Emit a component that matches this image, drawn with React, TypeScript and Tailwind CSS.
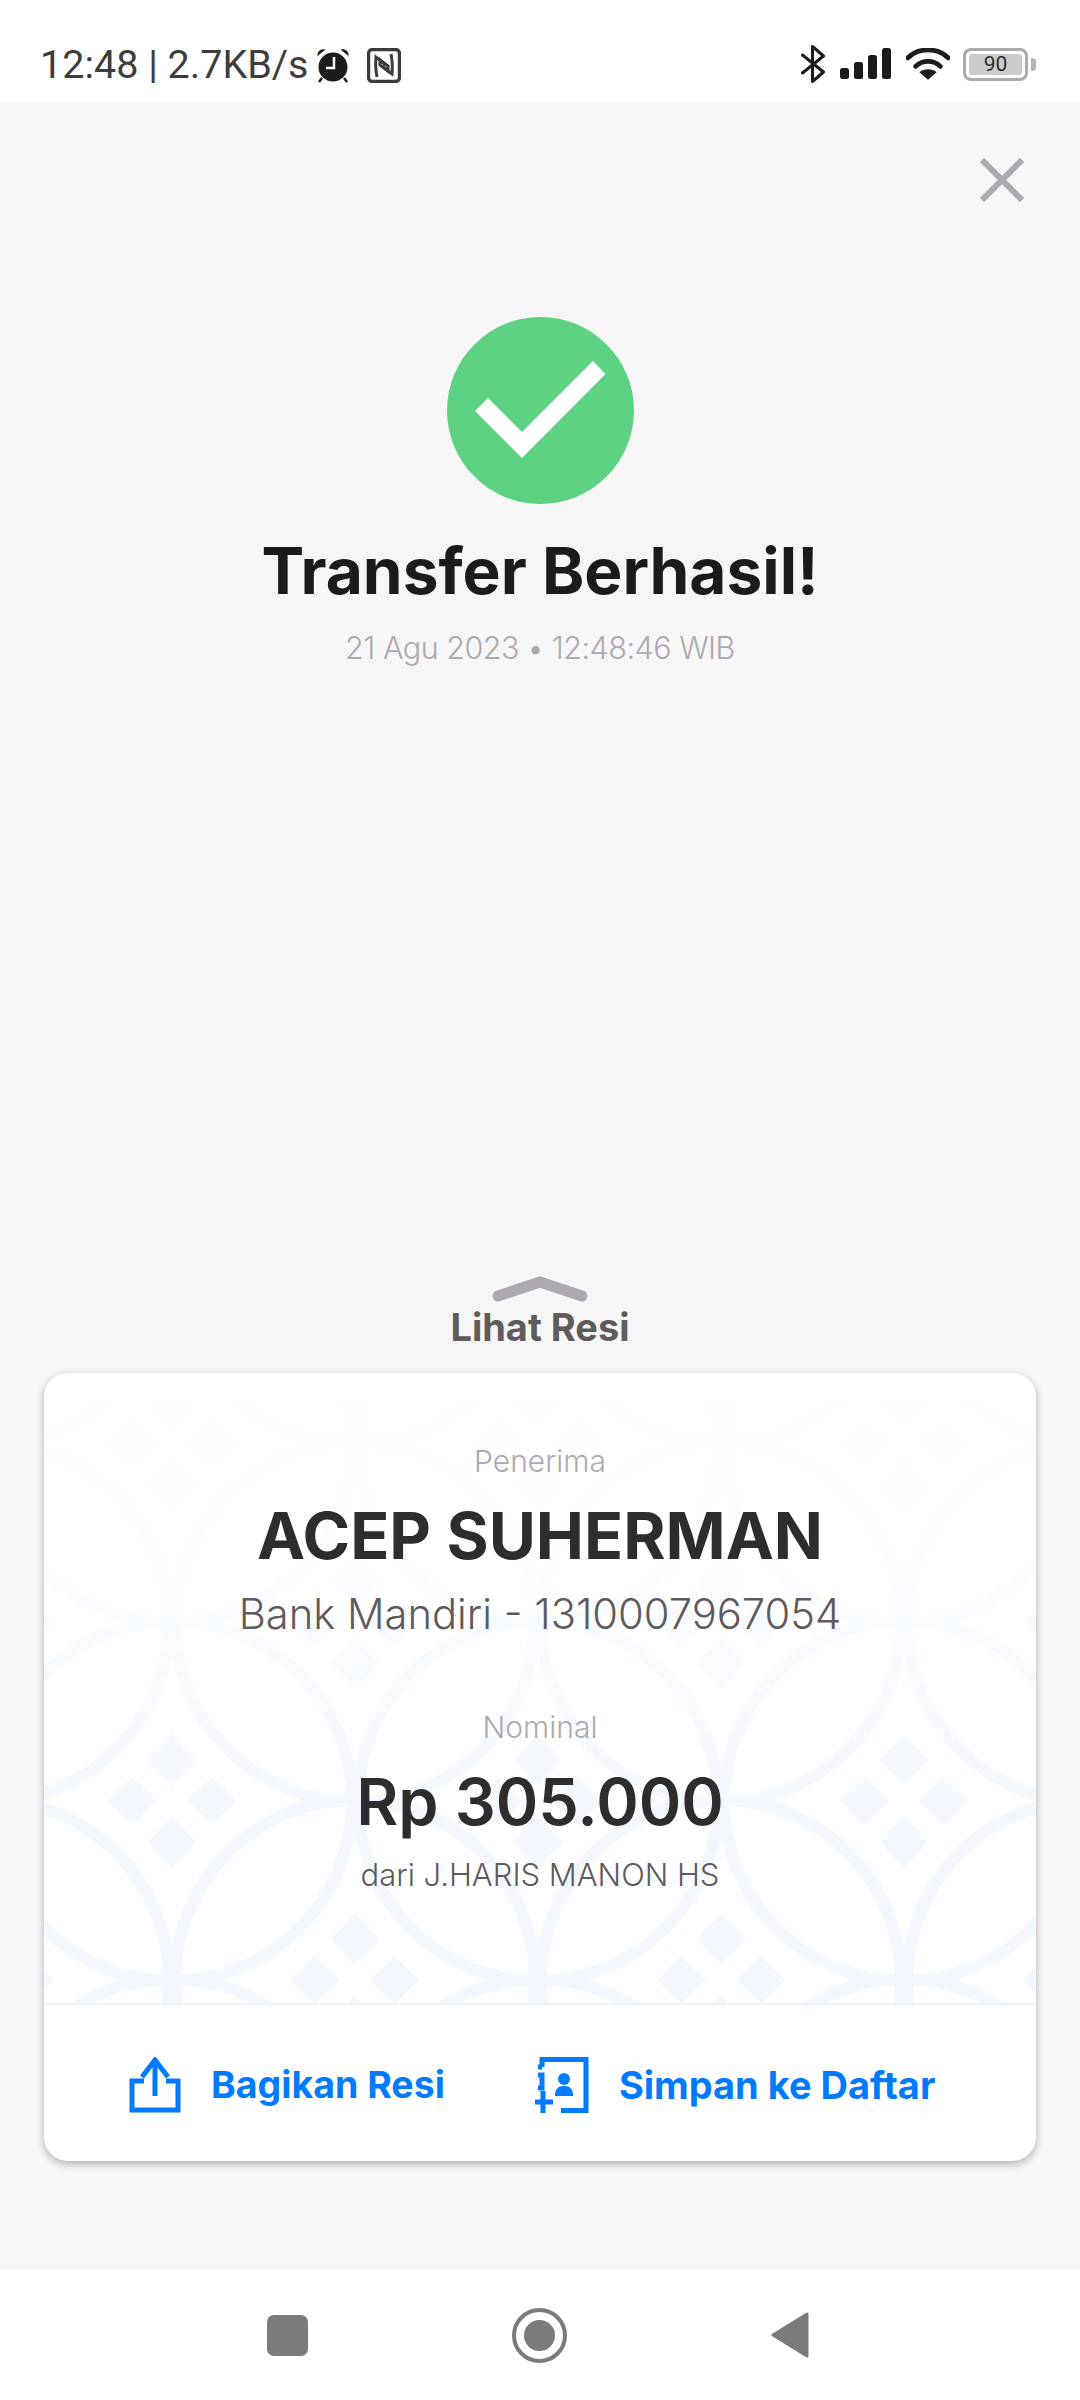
import React from "react";

function Alarm() {
  return (
    <svg width="36" height="36" viewBox="0 0 34 36" className="ml-[6px]">
      <circle cx="17" cy="20" r="14.5" fill="#1b1b1b" />
      <path d="M1.5 9 A6 6 0 0 1 9.5 2.5 Z M32.5 9 A6 6 0 0 0 24.5 2.5 Z" fill="#1b1b1b" />
      <path d="M6 31 L3 35 M28 31 L31 35" stroke="#1b1b1b" strokeWidth="2.5" />
      <path d="M18 10 V21 H10" stroke="#fff" strokeWidth="2.5" fill="none" />
    </svg>
  );
}

function Nfc() {
  return (
    <svg width="34" height="35" viewBox="0 0 34 35" className="ml-[16px]">
      <rect x="1.5" y="1.5" width="31" height="32" rx="4" fill="none" stroke="#3b3b3b" strokeWidth="3.4" />
      <path d="M10 29 C8.5 22 8.5 15 9 9 L21 18 V23 L15 18" fill="none" stroke="#3b3b3b" strokeWidth="3" />
      <path d="M24 6 C25.5 13 25.5 20 25 26 L13 17 V12 L19 17" fill="none" stroke="#3b3b3b" strokeWidth="3" />
    </svg>
  );
}

function StatusRight() {
  return (
    <div className="flex items-center pt-[2px]">
      <svg width="24" height="40" viewBox="0.5 0 24 40">
        <path d="M2 11 L23 28 L12 37.5 V2.5 L23 12 L2 29" fill="none" stroke="#1b1b1b" strokeWidth="3" strokeLinejoin="round" strokeLinecap="round" />
      </svg>
      <svg width="51" height="32" viewBox="1 0 51 32" className="ml-[15px]">
        <rect x="1" y="20" width="9" height="11" rx="2.5" fill="#1b1b1b" />
        <rect x="15" y="14" width="9" height="17" rx="2.5" fill="#1b1b1b" />
        <rect x="29" y="7" width="9" height="24" rx="2.5" fill="#1b1b1b" />
        <rect x="43" y="0" width="9" height="31" rx="2.5" fill="#1b1b1b" />
      </svg>
      <svg width="44" height="33" viewBox="0 0 46 34" className="ml-[15px]">
        <path d="M2 10 C13 -1 33 -1 44 10" fill="none" stroke="#1b1b1b" strokeWidth="5" strokeLinecap="round" />
        <path d="M10 19 C17 12 29 12 36 19" fill="none" stroke="#1b1b1b" strokeWidth="5" strokeLinecap="round" />
        <path d="M23 33 L14 25 C19 21 27 21 32 25 Z" fill="#1b1b1b" />
      </svg>
      <div className="ml-[13px] w-[65px] h-[33px] rounded-[8px] border-[3px] border-[#ababab] bg-white p-[3px] flex">
        <div className="flex-1 rounded-[3px] bg-[#cccccc] flex items-center justify-center text-[#2e2e2e] text-[21px] leading-none font-['Roboto',sans-serif]">
          90
        </div>
      </div>
      <div className="ml-[3px] w-[5px] h-[13px] bg-[#b5b5b5] rounded-r-[4px]" />
    </div>
  );
}

function Pattern() {
  return (
    <svg
      className="absolute inset-0 w-full h-full [mask-image:linear-gradient(to_bottom,rgba(0,0,0,0.03),rgba(0,0,0,0.35)_32%,black_72%)]"
      aria-hidden="true"
    >
      <defs>
        <pattern id="shippo" width="366" height="358" patternUnits="userSpaceOnUse" patternTransform="translate(128 70)">
          <g fill="none" stroke="#f3f8fe" strokeWidth="12">
            <circle cx="0" cy="0" r="180" />
            <circle cx="366" cy="0" r="180" />
            <circle cx="0" cy="358" r="180" />
            <circle cx="366" cy="358" r="180" />
            <circle cx="183" cy="179" r="180" />
          </g>
          <g fill="#f3f8fe">
            <g id="cl">
              <path d="M0 -67 L24 -41 L0 -15 L-24 -41Z" />
              <path d="M0 67 L24 41 L0 15 L-24 41Z" />
              <path d="M-40 -24 L-15 0 L-40 24 L-64 0Z" />
              <path d="M40 -24 L15 0 L40 24 L64 0Z" />
            </g>
            <use href="#cl" x="366" />
            <use href="#cl" y="358" />
            <use href="#cl" x="366" y="358" />
            <use href="#cl" x="183" y="179" />
          </g>
        </pattern>
      </defs>
      <rect width="100%" height="100%" fill="url(#shippo)" />
    </svg>
  );
}

export default function App() {
  return (
    <div className="w-[1080px] h-[2400px] flex flex-col bg-[#f6f6f6] font-['Inter',sans-serif] overflow-hidden">
      <div className="h-[102px] bg-white flex items-start justify-between pl-[40px] pr-[44px] pt-[42px]">
        <div className="flex items-center">
          <span className="font-['Roboto',sans-serif] text-[39.5px] leading-[46px] text-[#3d3d3d]">12:48 | 2.7KB/s</span>
          <Alarm />
          <Nfc />
        </div>
        <StatusRight />
      </div>

      <main className="flex-1 flex flex-col items-center relative">
        <div className="self-end pt-[56px] pr-[56px]">
          <svg width="44" height="44" viewBox="0 0 44 44" className="block">
            <path d="M2 2 L42 42 M42 2 L2 42" stroke="#aea8b0" strokeWidth="6" />
          </svg>
        </div>
        <div className="mt-[115px] w-[187px] h-[187px] rounded-full bg-[#5ed283] flex items-center justify-center">
          <svg width="131" height="97" viewBox="0 0 131 97" className="-mt-[3px]">
            <polygon points="0,50 13,37 47,71 118,0 130.5,13 47,97" fill="#fff" />
          </svg>
        </div>
        <h1 className="mt-[28px] text-[64px] leading-[78px] font-bold text-[#1b1b1b]">Transfer Berhasil!</h1>
        <p className="mt-[18px] text-[30.5px] leading-[40px] text-[#aea8b0] font-light tracking-[-0.5px]">21 Agu 2023 • 12:48:46 WIB</p>

        <svg width="96" height="26" viewBox="0 0 96 26" className="mt-[608px] block">
          <path d="M6 20 L48 6 L90 20" fill="none" stroke="#aea8b0" strokeWidth="11" strokeLinecap="round" strokeLinejoin="miter" />
        </svg>
        <p className="mt-[3px] text-[38px] leading-[44px] font-bold text-[#5f5a5c]">Lihat Resi</p>

        <section className="mt-[24px] w-[992px] h-[788px] rounded-[24px] bg-white shadow-[0_3px_8px_rgba(0,0,0,0.28)] overflow-hidden flex flex-col">
          <div className="relative h-[632px] border-b-2 border-[#f1f2f4] flex flex-col items-center">
            <Pattern />
            <div className="relative flex flex-col items-center">
              <p className="mt-[68px] text-[30px] leading-[40px] font-light text-[#aea8b0]">Penerima</p>
              <h2 className="mt-[17px] text-[64.5px] leading-[76px] font-bold text-[#2d2d2d]">ACEP SUHERMAN</h2>
              <p className="mt-[15px] text-[41.7px] leading-[50px] font-light text-[#5f5a5c]">Bank Mandiri - 1310007967054</p>
              <p className="mt-[68px] text-[30px] leading-[40px] font-light text-[#aea8b0]">Nominal</p>
              <p className="mt-[17px] text-[64.5px] leading-[76px] font-semibold text-[#2d2d2d]">Rp 305.000</p>
              <p className="mt-[15px] text-[31px] leading-[40px] font-light text-[#5f5a5c]">dari J.HARIS MANON HS</p>
            </div>
          </div>
          <div className="flex-1 flex items-center pl-[85px] pt-[3px]">
            <svg width="52" height="56" viewBox="0 0 52 56">
              <path d="M15 24 H3 V53 H49 V24 H37" fill="none" stroke="#007aff" strokeWidth="5" />
              <path d="M26 39 V4 M13 20 L26 3 L39 20" fill="none" stroke="#007aff" strokeWidth="5" />
            </svg>
            <span className="ml-[30px] text-[37.5px] leading-[46px] font-bold text-[#007aff]">Bagikan Resi</span>
            <svg width="54" height="56" viewBox="0 0 54 56" className="ml-[90px]">
              <path d="M7 10 V2.5 H51 V53.5 H26 M7 10 H3 M7 24 V18 H3 M7 24 V31 H3" fill="none" stroke="#007aff" strokeWidth="5" />
              <path d="M8 34 V56 M0 45 H18" fill="none" stroke="#007aff" strokeWidth="5" />
              <circle cx="29" cy="22" r="6" fill="#007aff" />
              <path d="M20 39 C20 32 23 29 29 29 C35 29 38 32 38 39 Z" fill="#007aff" />
            </svg>
            <span className="ml-[30px] text-[38px] leading-[46px] font-bold text-[#007aff]">Simpan ke Daftar</span>
          </div>
        </section>
      </main>

      <nav className="h-[130px] bg-white flex items-center pl-[267px]">
        <div className="w-[41px] h-[41px] rounded-[7px] bg-[#7b7b7b]" />
        <div className="ml-[204px] w-[55px] h-[55px] rounded-full border-[4px] border-[#7b7b7b] flex items-center justify-center">
          <div className="w-[31px] h-[31px] rounded-full bg-[#7b7b7b]" />
        </div>
        <svg width="38" height="48" viewBox="0 0 38 48" className="ml-[204px]">
          <path d="M36 3 V45 L2 24 Z" fill="#7b7b7b" stroke="#7b7b7b" strokeWidth="3" strokeLinejoin="round" />
        </svg>
      </nav>
    </div>
  );
}
